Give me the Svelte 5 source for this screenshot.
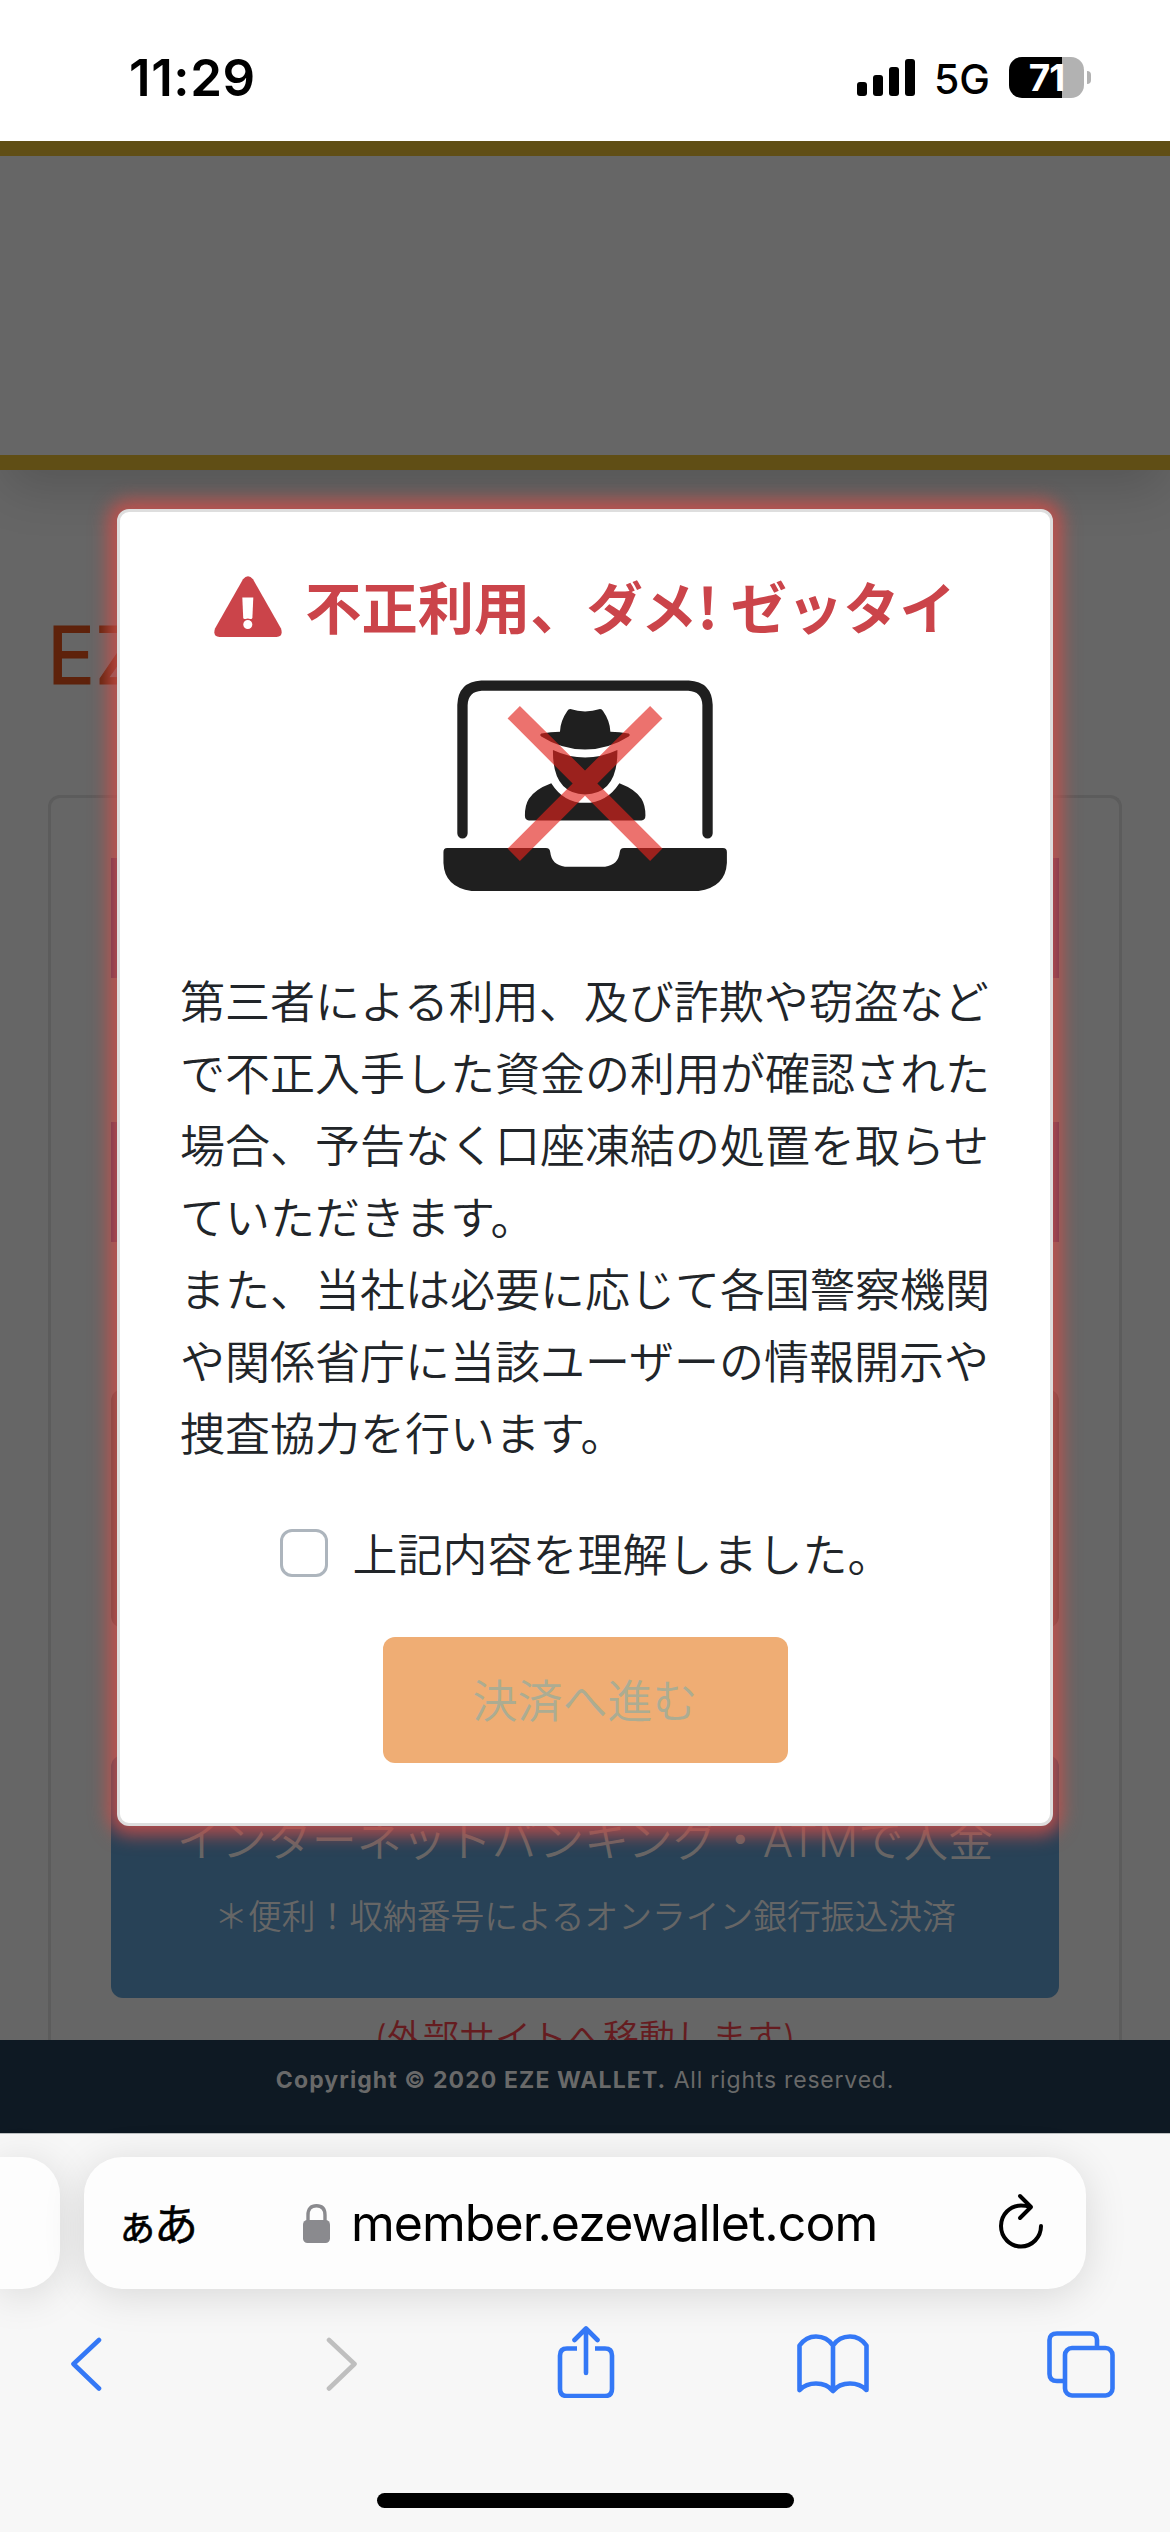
<script>
  const bodyLines = [
    '第三者による利用、及び詐欺や窃盗など',
    'で不正入手した資金の利用が確認された',
    '場合、予告なく口座凍結の処置を取らせ',
    'ていただきます。',
    'また、当社は必要に応じて各国警察機関',
    'や関係省庁に当該ユーザーの情報開示や',
    '捜査協力を行います。'
  ];
</script>

<div class="screen">
  <header class="status">
    <span class="time">11:29</span>
    <div class="indicators">
      <svg class="signal" width="58" height="37" viewBox="0 0 58 37">
        <rect x="0" y="23" width="10" height="14" rx="3" />
        <rect x="16" y="16" width="10" height="21" rx="3" />
        <rect x="32" y="8" width="10" height="29" rx="3" />
        <rect x="48" y="0" width="10" height="37" rx="3" />
      </svg>
      <span class="net">5G</span>
      <div class="battery"><span>71</span></div>
      <div class="nub"></div>
    </div>
  </header>

  <main class="page">
    <div class="banner"></div>
    <h1>EZE</h1>
    <section class="card">
      <div class="field"></div>
      <div class="field second"></div>
      <div class="tile red"></div>
      <div class="tile blue">
        <p class="bank">インターネットバンキング・ATMで入金</p>
        <p class="note">＊便利！収納番号によるオンライン銀行振込決済</p>
      </div>
      <p class="external">(外部サイトへ移動します)</p>
    </section>
    <footer><b>Copyright © 2020 EZE WALLET.</b> All rights reserved.</footer>

    <div class="modal">
      <h2>
        <svg width="68" height="61" viewBox="0 0 68 61">
          <path d="M29 3.2Q34-2.6 39 3.2L67 52.5Q69.500 60.500 62.500 61H5.500Q-1.500 60.500 1 52.500Z" fill="#cb444a" />
          <path d="M28.300 21.500H39.300L38.400 41.500Q38.300 43 37 43H30.600Q29.300 43 29.200 41.500Z" fill="#fff" />
          <circle cx="33.800" cy="48.500" r="5.300" fill="#fff" stroke="#cb444a" stroke-width="1.500" />
        </svg>
        <span>不正利用、ダメ! ゼッタイ</span>
      </h2>
      <svg class="laptop" width="284" height="211" viewBox="130 60 850 632">
        <g fill="#1f1f1f">
          <path d="M188 519V135Q190 80 245 77H865Q920 80 922 135V519" fill="none" stroke="#1f1f1f" stroke-width="31" stroke-linecap="round" />
          <path d="M142 563H438Q450 563 451 576Q455 614 495 619H615Q655 614 659 576Q660 563 672 563H968Q980 563 980 575V608Q976 680 895 692H215Q134 680 131 608V575Q131 563 142 563Z" />
          <path d="M511 147Q555 161 600 147Q606 147 609 153Q630 183 631 215Q658 215 686 220Q692 224 686 229Q625 268 555 268Q485 268 424 229Q418 224 424 220Q452 215 480 215Q481 183 502 153Q505 147 511 147Z" />
          <path d="M459 270Q555 315 652 270Q654 400 555 403Q457 400 459 270Z" />
          <path d="M454 369Q491 428 555 428Q620 428 658 369Q708 388 724 416Q736 435 736 466Q736 480 724 481H387Q375 480 375 466Q375 435 387 416Q403 388 454 369Z" />
        </g>
        <path d="M360 138L555 331L750 138L787 175L592 370L787 565L750 602L555 407L360 602L323 565L518 370L323 175Z" fill="#e2231c" fill-opacity=".64" />
      </svg>
      <div class="body">
        {#each bodyLines as line}<p>{line}</p>{/each}
      </div>
      <label class="agree"><i class="box"></i><span>上記内容を理解しました。</span></label>
      <div class="proceed">決済へ進む</div>
    </div>
  </main>

  <nav class="browser">
    <div class="tabs">
      <div class="prev"></div>
      <div class="address">
        <span class="lang"><small>ぁ</small>あ</span>
        <svg class="lock" width="27" height="39" viewBox="0 0 27 39">
          <rect x="0" y="16" width="27" height="23" rx="4.500" fill="#8a8a8e" />
          <path d="M5 18V11Q5 1.800 13.500 1.800Q22 1.800 22 11V18" fill="none" stroke="#8a8a8e" stroke-width="3.400" />
        </svg>
        <span class="url">member.ezewallet.com</span>
        <svg class="reload" width="46" height="56" viewBox="0 0 46 56" fill="none" stroke="#000" stroke-width="4" stroke-linecap="round" stroke-linejoin="round">
          <path d="M43 33A20 20.500 0 1 1 23 12.500Q28 12.500 32 14" />
          <path d="M22 3L33 14L22 25" />
        </svg>
      </div>
    </div>
    <div class="tools">
      <svg class="back" width="32" height="54" viewBox="0 0 32 54"><path d="M29 3L3.500 27L29 51.500" /></svg>
      <svg class="off" width="32" height="54" viewBox="0 0 32 54"><path d="M3 3L28.500 27L3 51.500" /></svg>
      <svg class="share" width="58" height="72" viewBox="0 0 58 72">
        <path d="M29 3V47M17.500 14L29 2.500L40.500 14" />
        <path class="butt" d="M20 22.500H10Q3 22.500 3 29.500V63Q3 70 10 70H48Q55 70 55 63V29.500Q55 22.500 48 22.500H38" />
      </svg>
      <svg class="book" width="72" height="60" viewBox="0 0 72 60">
        <path d="M2.500 11.500Q9 2.500 19 2.500Q30 2.500 36 11.500Q42 2.500 53 2.500Q63 2.500 69.500 11.500V56Q63 49.500 53 49.500Q42 49.500 36 57Q30 49.500 19 49.500Q9 49.500 2.500 56ZM36 11.500V57" />
      </svg>
      <svg width="68" height="67" viewBox="0 0 68 67">
        <path class="butt" d="M17 50H10Q2.500 50 2.500 43V9Q2.500 2.500 10 2.500H43Q50 2.500 50 9V16" />
        <rect x="18" y="17" width="47.500" height="47.500" rx="7" />
      </svg>
    </div>
    <div class="home"></div>
  </nav>
</div>

<style>
  :global(body) { margin: 0; }
  .screen {
    width: 1170px; height: 2532px; overflow: hidden; display: flex; flex-direction: column;
    font-family: Inter, "Noto Sans CJK JP", sans-serif; background: #fff; color: #212529;
  }
  p, h1, h2 { margin: 0; white-space: nowrap; }
  svg { display: block; flex: none; }
  .status { height: 141px; flex: none; display: flex; justify-content: space-between; box-sizing: border-box; padding: 57px 79px 0 129px; color: #000; }
  .time { font-size: 51px; font-weight: 600; line-height: 42px; letter-spacing: .6px; }
  .indicators { display: flex; }
  .signal { margin: 2px 19px 0 0; }
  .net { width: 75px; font-size: 41px; line-height: 44px; font-weight: 450; }
  .battery {
    width: 75px; height: 41px; border-radius: 13px; background: linear-gradient(90deg, #000 53px, #b2b2b2 53px);
    color: #fff; font-weight: 700; font-size: 37px; line-height: 41px; text-align: center; letter-spacing: -1px;
  }
  .nub { width: 4px; height: 13px; margin: 14px 0 0 3px; border-radius: 0 5px 5px 0; background: #b2b2b2; }

  .page { position: relative; height: 1992px; flex: none; background: #666; overflow: hidden; display: flex; flex-direction: column; }
  .banner { flex: none; height: 299px; border: solid #604e15; border-width: 15px 0; box-shadow: 0 24px 48px -6px rgba(0,0,0,.16); }
  h1 { flex: none; font-size: 80px; font-weight: 400; line-height: 96px; padding: 137px 0 0 47px; color: #5e220b; height: 96px; -webkit-text-stroke: 1px #5e220b; }
  .card { flex: 1; min-height: 0; margin: 92px 48px 0; border: 3px solid #5c5c5c; border-bottom: 0; border-radius: 12px 12px 0 0; padding: 60px 60px 0; text-align: center; }
  .field { height: 120px; background: #3c2c55; }
  .second { margin-top: 144px; }
  .tile { border-radius: 12px; }
  .red { height: 239px; margin-top: 147px; background: #444; }
  .blue { height: 243px; margin-top: 127px; background: #284257; color: #666; box-sizing: border-box; padding-top: 52px; }
  .bank { font-size: 45px; line-height: 68px; font-weight: 350; }
  .note { font-size: 33.75px; line-height: 50px; font-weight: 350; margin-top: 17px; }
  .external { font-size: 36px; line-height: 54px; margin-top: 13px; color: #651c20; font-weight: 350; }
  footer { position: relative; flex: none; height: 93px; background: #0e1923; color: #696969; text-align: center; font-size: 23px; line-height: 80px; letter-spacing: .800px; white-space: nowrap; }
  footer b { letter-spacing: 1.100px; }

  .modal {
    position: absolute; left: 117px; top: 368px; width: 936px; height: 1317px; box-sizing: border-box;
    background: #fff; border: 3px solid #dedede; border-radius: 12px;
    box-shadow: 0 0 18px 9px rgba(203,78,74,.88);
    display: flex; flex-direction: column; align-items: center;
  }
  h2 { display: flex; align-items: center; gap: 23px; margin-top: 54px; height: 80px; color: #cb444a; font-size: 56.250px; font-weight: 700; line-height: 78px; }
  h2 span { font-family: "Noto Sans CJK JP", sans-serif; padding-bottom: 2px; }
  .laptop { margin-top: 34px; }
  .body { width: 810px; margin-top: 76px; font-size: 45px; line-height: 72px; font-weight: 350; }
  .agree { display: flex; align-items: center; gap: 24px; margin-top: 46px; height: 72px; font-size: 45px; font-weight: 350; padding-left: 3px; }
  .agree span { padding-bottom: 2px; }
  .box { width: 42px; height: 42px; border: 3px solid #adb5bd; border-radius: 12px; }
  .proceed { width: 405px; height: 126px; margin-top: 48px; border-radius: 12px; background: #efad74; color: #acac92; font-size: 45px; font-weight: 350; line-height: 129px; text-align: center; }

  .browser { position: relative; flex: 1; background: #f7f7f7; border-top: 1px solid #bcc0c1; display: flex; flex-direction: column; }
  .tabs { display: flex; gap: 24px; padding-top: 23px; }
  .prev, .address { height: 132px; background: #fdfdfd; box-shadow: 0 6px 42px rgba(0,0,0,.13); }
  .prev { width: 60px; border-radius: 0 38px 38px 0; }
  .address { width: 1002px; border-radius: 38px; display: flex; align-items: center; box-sizing: border-box; color: #000; }
  .lang { width: 187px; padding-left: 32px; font-size: 44px; font-weight: 400; font-family: "Noto Sans CJK JP", sans-serif; white-space: nowrap; line-height: 60px; padding-bottom: 2px; -webkit-text-stroke: .6px #000; }
  .lang small { font-size: 42px; letter-spacing: -4px; }
  .url { width: 648px; padding-left: 21px; font-size: 50px; letter-spacing: -.970px; }
  .reload { margin: -4px 0 0 -1px; }
  .tools { display: flex; align-items: center; padding: 0 0 0 70px; margin-top: 35px; height: 80px; }
  .back { margin-right: 224px; }
  .off { margin-right: 199px; }
  .share { margin: -4px 182px 0 0; }
  .book { margin-right: 178px; }
  .tools path, .tools rect { fill: none; stroke: #3478f6; stroke-width: 4.600; stroke-linecap: round; stroke-linejoin: round; }
  .tools .off path { stroke: #bfbfbf; }
  .tools .butt { stroke-linecap: butt; }
  .home { width: 417px; height: 15px; border-radius: 8px; background: #000; margin: 89px auto 0; }
</style>
